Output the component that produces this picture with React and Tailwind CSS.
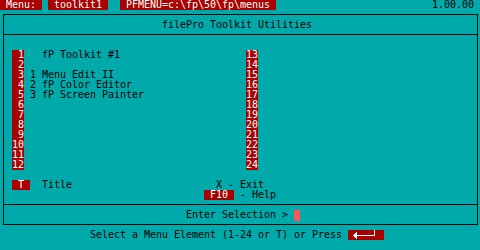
const sp = (n) => ' '.repeat(n);
const pad2 = (n) => String(n).padStart(2, ' ');

// red "reverse video" cell, one text row tall
function Red({ children }) {
  return (
    <span className="inline-block h-[10px] align-top bg-[#aa0000] text-white">{children}</span>
  );
}

function Line({ children }) {
  return <div className="h-[10px] whitespace-pre">{children}</div>;
}

function EnterKey() {
  return (
    <span className="inline-block h-[10px] w-[36px] align-top bg-[#aa0000]">
      <svg width="36" height="10" viewBox="0 0 36 10" shapeRendering="crispEdges">
        <polygon points="5,5.5 9,2 9,9" fill="#fff" />
        <rect x="9" y="5" width="18" height="1" fill="#fff" />
        <rect x="26" y="0" width="1" height="6" fill="#fff" />
      </svg>
    </span>
  );
}

const leftItems = [
  '   fP Toolkit #1',
  '',
  ' 1 Menu Edit II',
  ' 2 fP Color Editor',
  ' 3 fP Screen Painter',
];

export default function App() {
  const rows = Array.from({ length: 12 }, (_, i) => i);

  return (
    <div className="w-[480px] h-[250px] overflow-hidden bg-[#00aaaa] text-black font-['DejaVu_Sans_Mono',monospace] text-[10px] leading-[10px] tracking-[-0.02px]">
      {/* status line */}
      <Line>
        <Red> Menu: </Red>
        {' '}
        <Red> toolkit1 </Red>
        {'  '}
        <Red>{' PFMENU=c:\\fp\\50\\fp\\menus '}</Red>
        {sp(26)}1.00.00
      </Line>

      {/* menu frame */}
      <div className="ml-[3px] mt-[4px] w-[475px] border border-black">
        <div className="pl-[2px] pt-[5px] pb-[4px] border-b border-black">
          <Line>{sp(26)}filePro Toolkit Utilities</Line>
        </div>

        <div className="pl-[2px] pt-[5px] pb-[4px] border-b border-black">
          <Line />
          {rows.map((i) => (
            <Line key={i}>
              {' '}
              <Red>{pad2(i + 1)}</Red>
              {(leftItems[i] || '').padEnd(37, ' ')}
              <Red>{pad2(i + 13)}</Red>
            </Line>
          ))}
          <Line />
          <Line>
            {' '}
            <Red> T </Red>
            {'  Title'}
            {sp(24)}X - Exit
          </Line>
          <Line>
            {sp(33)}
            <Red> F10 </Red>
            {' - Help'}
          </Line>
        </div>

        <div className="pl-[2px] pt-[5px] pb-[4px]">
          <Line>
            {sp(30)}
            {'Enter Selection > '}
            <span className="inline-block w-[6px] h-[11px] align-top bg-[#ff5555]" />
          </Line>
        </div>
      </div>

      <div className="mt-[5px]">
        <Line>
          {sp(15)}
          {'Select a Menu Element (1-24 or T) or Press '}
          <EnterKey />
        </Line>
      </div>
    </div>
  );
}
